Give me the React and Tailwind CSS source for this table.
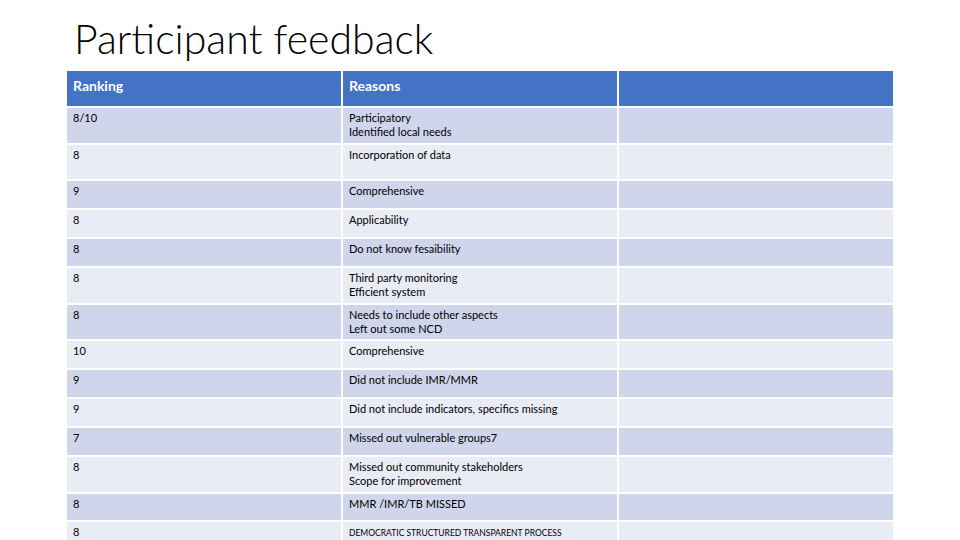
const rows = [
  { rank: "8/10", lines: ["Participatory", "Identified local needs"], h: "h-[35px]" },
  { rank: "8", lines: ["Incorporation of data"], h: "h-[34px]" },
  { rank: "9", lines: ["Comprehensive"], h: "h-[27px]" },
  { rank: "8", lines: ["Applicability"], h: "h-[27px]" },
  { rank: "8", lines: ["Do not know fesaibility"], h: "h-[27px]" },
  { rank: "8", lines: ["Third party monitoring", "Efficient system"], h: "h-[35px]" },
  { rank: "8", lines: ["Needs to include other aspects", "Left out some NCD"], h: "h-[34px]" },
  { rank: "10", lines: ["Comprehensive"], h: "h-[27px]" },
  { rank: "9", lines: ["Did not include IMR/MMR"], h: "h-[27px]" },
  { rank: "9", lines: ["Did not include indicators, specifics missing"], h: "h-[27px]" },
  { rank: "7", lines: ["Missed out vulnerable groups7"], h: "h-[27px]" },
  { rank: "8", lines: ["Missed out community stakeholders", "Scope for improvement"], h: "h-[35px]" },
  { rank: "8", lines: ["MMR /IMR/TB MISSED"], h: "h-[26px]" },
  { rank: "8", lines: ["DEMOCRATIC STRUCTURED TRANSPARENT PROCESS"], h: "h-[30px]", small: true },
];

function Cell({ children, bg, h, className = "" }) {
  return <div className={`${bg} ${h} px-[6px] ${className}`}>{children}</div>;
}

export default function App() {
  return (
    <div
      className="w-[960px] h-[540px] overflow-hidden bg-white text-black"
      style={{ fontFamily: "Lato, 'Open Sans', sans-serif" }}
    >
      <h1 className="pl-[74px] pt-[14px] h-[71px] text-[41px] leading-[50px] font-light">
        Participant feedback
      </h1>

      <div className="ml-[67px] grid grid-cols-[274px_274px_274px] gap-[2px] w-[826px]">
        <div className="bg-[#4472c4] h-[35px] px-[6px] pt-[4px] text-[14px] font-bold text-white">
          Ranking
        </div>
        <div className="bg-[#4472c4] h-[35px] px-[6px] pt-[4px] text-[14px] font-bold text-white">
          Reasons
        </div>
        <div className="bg-[#4472c4] h-[35px]" />

        {rows.map((r, i) => {
          const bg = i % 2 === 0 ? "bg-[#cfd5ea]" : "bg-[#e9ebf5]";
          return [
            <Cell key={`a${i}`} bg={bg} h={r.h} className="pt-[3px] text-[11px] leading-[14px]">
              {r.rank}
            </Cell>,
            <Cell
              key={`b${i}`}
              bg={bg}
              h={r.h}
              className={
                r.small
                  ? "pt-[4px] text-[8.5px] leading-[14px]"
                  : "pt-[3px] text-[11px] leading-[14px]"
              }
            >
              {r.lines.map((l) => (
                <div key={l}>{l}</div>
              ))}
            </Cell>,
            <Cell key={`c${i}`} bg={bg} h={r.h} />,
          ];
        })}
      </div>
    </div>
  );
}
